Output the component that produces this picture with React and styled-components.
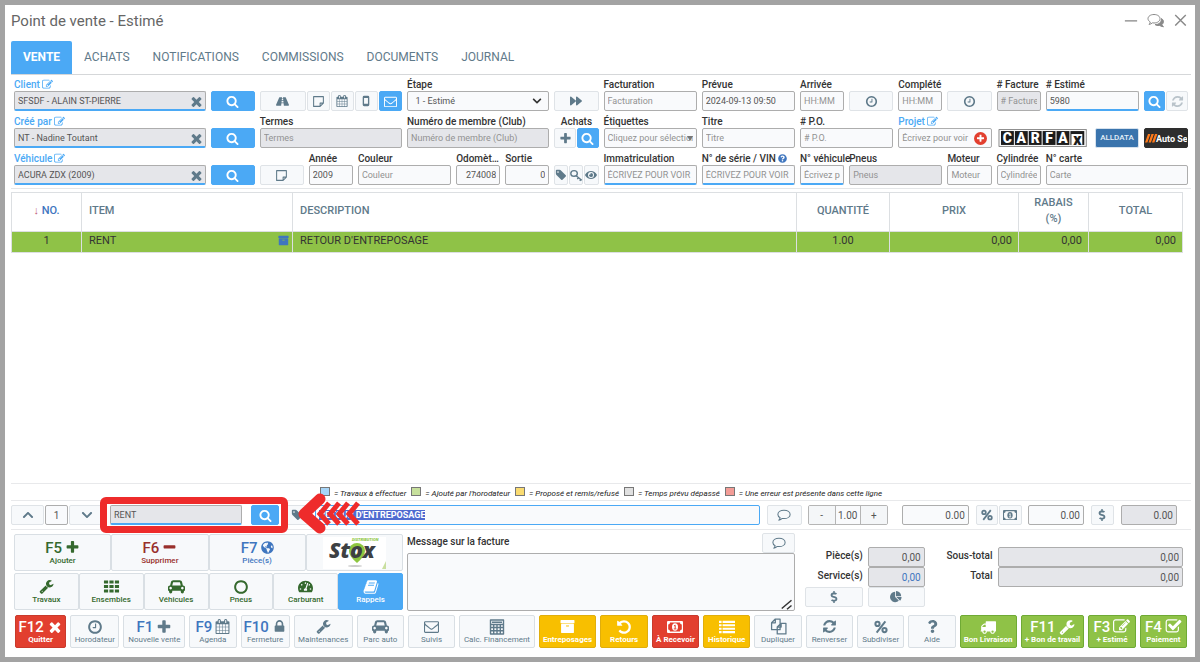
import React, { useEffect, useId, useRef } from "react";
import styled, { createGlobalStyle, css } from "styled-components";
import {
  FaChevronDown,
  FaChevronUp,
  FaDollarSign,
  FaEye,
  FaForward,
  FaGlobeAmericas,
  FaQuestion,
  FaQuestionCircle,
  FaRoad,
  FaTachometerAlt,
} from "react-icons/fa";

const blue = "#4ba9f5";
const slate = "#5f7a8a";
const link = "#3f76bf";
const green = "#8fc247";

const GlobalStyle = createGlobalStyle`
  *, *::before, *::after { box-sizing: border-box; }
  body { margin: 0; background: #a3a3a3; color: #333; font-family: Roboto, "Liberation Sans", sans-serif; font-size: 10px; }
  button, input, select, textarea { font: inherit; margin: 0; }
  button { cursor: pointer; }
  svg { display: block; flex: none; }
`;

/* ---------- icons ---------- */

const paths = {
  search:
    "M1216 832q0-185-131.5-316.5t-316.5-131.5-316.5 131.5-131.5 316.5 131.5 316.5 316.5 131.5 316.5-131.5 131.5-316.5zm512 832q0 52-38 90t-90 38q-54 0-90-38l-343-342q-179 124-399 124-143 0-273.5-55.5t-225-150-150-225-55.5-273.5 55.5-273.5 150-225 225-150 273.5-55.5 273.5 55.5 225 150 150 225 55.5 273.5q0 220-124 399l343 343q37 37 37 90z",
  times:
    "M1490 1322q0 40-28 68l-136 136q-28 28-68 28t-68-28l-294-294-294 294q-28 28-68 28t-68-28l-136-136q-28-28-28-68t28-68l294-294-294-294q-28-28-28-68t28-68l136-136q28-28 68-28t68 28l294 294 294-294q28-28 68-28t68 28l136 136q28 28 28 68t-28 68l-294 294 294 294q28 28 28 68z",
  plus: "M1600 736v192q0 40-28 68t-68 28h-416v416q0 40-28 68t-68 28h-192q-40 0-68-28t-28-68v-416h-416q-40 0-68-28t-28-68v-192q0-40 28-68t68-28h416v-416q0-40 28-68t68-28h192q40 0 68 28t28 68v416h416q40 0 68 28t28 68z",
  minus:
    "M1600 736v192q0 40-28 68t-68 28h-1216q-40 0-68-28t-28-68v-192q0-40 28-68t68-28h1216q40 0 68 28t28 68z",
  edit: "M888 1184l116-116-152-152-116 116v56h96v96h56zm440-720q-16-16-33 1l-350 350q-17 17-1 33t33-1l350-350q17-17 1-33zm80 594v190q0 119-84.5 203.5t-203.5 84.5h-832q-119 0-203.5-84.5t-84.5-203.5v-832q0-119 84.5-203.5t203.5-84.5h832q63 0 117 25 15 7 18 23 3 17-9 29l-49 49q-14 14-32 8-23-6-45-6h-832q-66 0-113 47t-47 113v832q0 66 47 113t113 47h832q66 0 113-47t47-113v-126q0-13 9-22l64-64q15-15 35-7t20 29zm-96-738l288 288-672 672h-288v-288zm444 132l-92 92-288-288 92-92q28-28 68-28t68 28l152 152q28 28 28 68t-28 68z",
  check:
    "M1472 930v318q0 119-84.5 203.5t-203.5 84.5h-832q-119 0-203.5-84.5t-84.5-203.5v-832q0-119 84.5-203.5t203.5-84.5h832q63 0 117 25 15 7 18 23 3 17-9 29l-49 49q-10 10-23 10-3 0-9-2-23-6-45-6h-832q-66 0-113 47t-47 113v832q0 66 47 113t113 47h832q66 0 113-47t47-113v-254q0-13 9-22l64-64q10-10 23-10 6 0 12 3 20 8 20 29zm231-489l-814 814q-24 24-57 24t-57-24l-430-430q-24-24-24-57t24-57l110-110q24-24 57-24t57 24l263 263 647-647q24-24 57-24t57 24l110 110q24 24 24 57t-24 57z",
  clock:
    "M1024 544v448q0 14-9 23t-23 9h-320q-14 0-23-9t-9-23v-64q0-14 9-23t23-9h224v-352q0-14 9-23t23-9h64q14 0 23 9t9 23zm416 352q0-148-73-273t-198-198-273-73-273 73-198 198-73 273 73 273 198 198 273 73 273-73 198-198 73-273zm224 0q0 209-103 385.5t-279.5 279.5-385.5 103-385.5-103-279.5-279.5-103-385.5 103-385.5 279.5-279.5 385.5-103 385.5 103 279.5 279.5 103 385.5z",
  circle:
    "M896 352q-148 0-273 73t-198 198-73 273 73 273 198 198 273 73 273-73 198-198 73-273-73-273-198-198-273-73zm768 544q0 209-103 385.5t-279.5 279.5-385.5 103-385.5-103-279.5-279.5-103-385.5 103-385.5 279.5-279.5 385.5-103 385.5 103 279.5 279.5 103 385.5z",
  wrench:
    "M448 1472q0-26-19-45t-45-19-45 19-19 45 19 45 45 19 45-19 19-45zm644-420l-682 682q-37 37-90 37-52 0-91-37l-106-108q-38-36-38-90 0-53 38-91l681-681q39 98 114.5 173.5t173.5 114.5zm634-435q0 39-23 106-47 134-164.5 217.5t-258.5 83.5q-185 0-316.5-131.5t-131.5-316.5 131.5-316.5 316.5-131.5q58 0 121.5 16.5t107.5 46.5q16 11 16 28t-16 28l-293 169v224l193 107q5-3 79-48.5t135.5-81 70.5-35.5q15 0 23.5 10t8.5 25z",
  lock: "M640 768h512v-192q0-106-75-181t-181-75-181 75-75 181v192zm832 96v576q0 40-28 68t-68 28h-960q-40 0-68-28t-28-68v-576q0-40 28-68t68-28h32v-192q0-184 132-316t316-132 316 132 132 316v192h32q40 0 68 28t28 68z",
  tag: "M576 448q0-53-37.5-90.5t-90.5-37.5-90.5 37.5-37.5 90.5 37.5 90.5 90.5 37.5 90.5-37.5 37.5-90.5zm1067 576q0 53-37 90l-491 492q-39 37-91 37-53 0-90-37l-715-716q-38-37-64.5-101t-26.5-117v-416q0-52 38-90t90-38h416q53 0 117 26.5t102 64.5l715 714q37 39 37 91z",
  archive:
    "M1088 832q0-26-19-45t-45-19h-256q-26 0-45 19t-19 45 19 45 45 19h256q26 0 45-19t19-45zm576-192v960q0 26-19 45t-45 19h-1408q-26 0-45-19t-19-45v-960q0-26 19-45t45-19h1408q26 0 45 19t19 45zm64-448v256q0 26-19 45t-45 19h-1536q-26 0-45-19t-19-45v-256q0-26 19-45t45-19h1536q26 0 45 19t19 45z",
  undo: "M1664 896q0 156-61 298t-164 245-245 164-298 61q-172 0-327-72.5t-264-204.5q-7-10-6.5-22.5t8.5-20.5l137-138q10-9 25-9 16 2 23 12 73 95 179 147t225 52q104 0 198.5-40.5t163.5-109.5 109.5-163.5 40.5-198.5-40.5-198.5-109.5-163.5-163.5-109.5-198.5-40.5q-98 0-188 35.5t-160 101.5l137 138q31 30 14 69-17 40-59 40h-448q-26 0-45-19t-19-45v-448q0-42 40-59 39-17 69 14l130 129q107-101 244.5-156.5t284.5-55.5q156 0 298 61t245 164 164 245 61 298z",
  refresh:
    "M1639 1056q0 5-1 7-64 268-268 434.5t-478 166.5q-146 0-282.5-55t-243.5-157l-129 129q-19 19-45 19t-45-19-19-45v-448q0-26 19-45t45-19h448q26 0 45 19t19 45-19 45l-137 137q71 66 161 102t187 36q134 0 250-65t186-179q11-17 53-117 8-23 30-23h192q13 0 22.5 9.5t9.5 22.5zm25-800v448q0 26-19 45t-45 19h-448q-26 0-45-19t-19-45 19-45l138-138q-148-137-349-137-134 0-250 65t-186 179q-11 17-53 117-8 23-30 23h-199q-13 0-22.5-9.5t-9.5-22.5v-7q65-268 270-434.5t480-166.5q146 0 284 55.5t245 156.5l130-129q19-19 45-19t45 19 19 45z",
  mail: "M1664 1504v-768q-32 36-69 66-268 206-426 338-51 43-83 67t-86.5 48.5-102.5 24.5h-2q-48 0-102.5-24.5t-86.5-48.5-83-67q-158-132-426-338-37-30-69-66v768q0 13 9.5 22.5t22.5 9.5h1472q13 0 22.5-9.5t9.5-22.5zm0-1051v-24.5l-.5-13-3-12.5-5.5-9-9-7.5-14-2.5h-1472q-13 0-22.5 9.5t-9.5 22.5q0 168 147 284 193 152 401 317 6 5 35 29.5t46 37.5 44.5 31.5 50.5 27.5 43 9h2q20 0 43-9t50.5-27.5 44.5-31.5 46-37.5 35-29.5q208-165 401-317 54-43 100.5-115.5t46.5-131.5zm128-37v1088q0 66-47 113t-113 47h-1472q-66 0-113-47t-47-113v-1088q0-66 47-113t113-47h1472q66 0 113 47t47 113z",
  calendar:
    "M192 1664h288v-288h-288v288zm352 0h320v-288h-320v288zm-352-352h288v-320h-288v320zm352 0h320v-320h-320v320zm-352-384h288v-288h-288v288zm736 736h320v-288h-320v288zm-384-736h320v-288h-320v288zm768 736h288v-288h-288v288zm-384-352h320v-320h-320v320zm-352-864v-288q0-13-9.5-22.5t-22.5-9.5h-64q-13 0-22.5 9.5t-9.5 22.5v288q0 13 9.5 22.5t22.5 9.5h64q13 0 22.5-9.5t9.5-22.5zm736 864h288v-320h-288v320zm-384-384h320v-288h-320v288zm384 0h288v-288h-288v288zm32-480v-288q0-13-9.5-22.5t-22.5-9.5h-64q-13 0-22.5 9.5t-9.5 22.5v288q0 13 9.5 22.5t22.5 9.5h64q13 0 22.5-9.5t9.5-22.5zm384-64v1280q0 52-38 90t-90 38h-1408q-52 0-90-38t-38-90v-1280q0-52 38-90t90-38h128v-96q0-66 47-113t113-47h64q66 0 113 47t47 113v96h384v-96q0-66 47-113t113-47h64q66 0 113 47t47 113v96h128q52 0 90 38t38 90z",
  car: "M480 1088q0-66-47-113t-113-47-113 47-47 113 47 113 113 47 113-47 47-113zm36-320h1016l-89-357q-2-8-14-17.5t-21-9.5h-768q-9 0-21 9.5t-14 17.5zm1372 320q0-66-47-113t-113-47-113 47-47 113 47 113 113 47 113-47 47-113zm160-96v384q0 14-9 23t-23 9h-96v128q0 80-56 136t-136 56-136-56-56-136v-128h-1024v128q0 80-56 136t-136 56-136-56-56-136v-128h-96q-14 0-23-9t-9-23v-384q0-93 65.5-158.5t158.5-65.5h28l105-419q23-94 104-157.5t179-63.5h768q98 0 179 63.5t104 157.5l105 419h28q93 0 158.5 65.5t65.5 158.5z",
  truck:
    "M640 1408q0-52-38-90t-90-38-90 38-38 90 38 90 90 38 90-38 38-90zm-384-512h384v-256h-158q-13 0-22 9l-195 195q-9 9-9 22v30zm1280 512q0-52-38-90t-90-38-90 38-38 90 38 90 90 38 90-38 38-90zm256-1088v1024q0 15-4 26.5t-13.5 18.5-16.5 11.5-23.5 6-22.5 2-25.5 0-22.5-.5q0 106-75 181t-181 75-181-75-75-181h-384q0 106-75 181t-181 75-181-75-75-181h-64q-3 0-22.5.5t-25.5 0-22.5-2-23.5-6-16.5-11.5-13.5-18.5-4-26.5q0-26 19-45t45-19v-320q0-8-.5-35t0-38 2.5-34.5 6.5-37 14-30.5 22.5-30l198-198q19-19 50.5-32t58.5-13h160v-192q0-26 19-45t45-19h1024q26 0 45 19t19 45z",
  book: "M1703 478q40 57 18 129l-275 906q-19 64-76.5 107.5t-122.5 43.5h-923q-77 0-148.5-53.5t-99.5-131.5q-24-67-2-127 0-4 3-27t4-37q1-8-3-21.5t-3-19.5q2-11 8-21t16.5-23.5 16.5-23.5q23-38 45-91.5t30-91.5q3-10 .5-30t-.5-28q3-11 17-28t17-23q21-36 42-92t25-90q1-9-2.500-32t.5-28q4-13 22-30.500t22-22.500q19-26 42.500-84.500t27.500-96.500q1-8-3-25.500t-2-26.500q2-8 9-18t18-23 17-21q8-12 16.500-30.500t15-35 16-36 19.500-32 26.500-23.500 36-11.500 47.500 5.500l-1 3q38-9 51-9h761q74 0 114 56t18 130l-274 906q-36 119-71.500 153.500t-128.500 34.500h-869q-27 0-38 15-11 16-1 43 24 70 144 70h923q29 0 56-15.500t35-41.500l300-987q7-22 5-57 38 15 59 43zm-1064 2q-4 13 2 22.500t20 9.500h608q13 0 25.500-9.500t16.500-22.500l21-64q4-13-2-22.500t-20-9.500h-608q-13 0-25.500 9.500t-16.500 22.500zm-83 256q-4 13 2 22.500t20 9.500h608q13 0 25.500-9.500t16.500-22.500l21-64q4-13-2-22.500t-20-9.500h-608q-13 0-25.500 9.500t-16.500 22.500z",
  grid: "M100 256h440v330h-440zM676 256h440v330h-440zM1252 256h440v330h-440zM100 730h440v330h-440zM676 730h440v330h-440zM1252 730h440v330h-440zM100 1204h440v330h-440zM676 1204h440v330h-440zM1252 1204h440v330h-440z",
  list: "M0 200h290v240h-290zM400 200h1392v240h-1392zM0 584h290v240h-290zM400 584h1392v240h-1392zM0 968h290v240h-290zM400 968h1392v240h-1392zM0 1352h290v240h-290zM400 1352h1392v240h-1392z",
  pie: "M768 890l546 546q-106 108-247.500 168t-298.500 60q-209 0-385.500-103t-279.500-279.500-103-385.500 103-385.500 279.500-279.500 385.500-103v762zM955 896h773q0 157-60 298.500t-168 247.500zM1664 768h-768v-768q209 0 385.500 103t279.500 279.500 103 385.500z",
};

const Glyph = ({ name, size = 12 }) => (
  <svg
    width={size}
    height={size}
    viewBox={name === "car" ? "0 0 2048 1792" : "0 0 1792 1792"}
    fill="currentColor"
    aria-hidden="true"
  >
    <path d={paths[name]} />
  </svg>
);

const Line = ({ size = 14, width = 1.3, children }) => (
  <svg
    width={size}
    height={size}
    viewBox="0 0 16 16"
    fill="none"
    stroke="currentColor"
    strokeWidth={width}
    strokeLinejoin="round"
    aria-hidden="true"
  >
    {children}
  </svg>
);

const Note = ({ size }) => (
  <Line size={size}>
    <path d="M2 2h12v8l-4 4H2zM14 10h-4v4" />
  </Line>
);
const Bubble = ({ size }) => (
  <Line size={size} width={1.2}>
    <path d="M8 2.500c4 0 7 2.100 7 4.800s-3 4.800-7 4.800q-1 0-1.900-.2Q4.200 13.600 2 14q1.300-1.400 1.600-2.900C2 10.200 1 8.900 1 7.300c0-2.700 3-4.800 7-4.800z" />
  </Line>
);
const Bubbles = () => (
  <svg width="18" height="16" viewBox="0 0 18 16" fill="none" stroke="currentColor" aria-hidden="true">
    <path d="M7 1.500c3.500 0 6 1.800 6 4.200S10.500 10 7 10l-1.500-.2Q4 11.200 2 11.400q1-1 1.300-2.400C1.900 8.200 1 7 1 5.700c0-2.400 2.500-4.200 6-4.200z" />
    <path
      fill="currentColor"
      d="M14.500 5.500c2.800 2 2.300 4.600.4 6q.4 1.400 1.600 2.200-2.300 0-3.800-1.300-3 .5-4.700-.8 6.600 0 6.500-6.100z"
    />
  </svg>
);
const Phone = () => (
  <Line size={12} width={1.8}>
    <rect x="4.500" y="2" width="7" height="12" rx="1" />
    <path d="M4.500 3h7M4.500 12.500h7" />
  </Line>
);
const Percent = ({ size }) => (
  <Line size={size} width={2.3}>
    <circle cx="4" cy="4.500" r="2.400" />
    <circle cx="12" cy="11.500" r="2.400" />
    <path d="M13 1.500L3 14.500" />
  </Line>
);
const Key = () => (
  <Line size={13} width={1.7}>
    <ellipse cx="5" cy="5.500" rx="4" ry="3.500" />
    <path d="M7.500 8.300l7 5.500M10.500 10.500l-1.500 2M13.500 12.500l-1.500 2" />
  </Line>
);
const Money = ({ size = 16, solid }) => (
  <svg width={size} height={(size * 3) / 4} viewBox="0 0 16 12" aria-hidden="true">
    <rect x="0" y="0" width="16" height="12" rx="1" fill="currentColor" />
    <path d="M3 1.500h10q0 2 1.800 2v5q-1.800 0-1.800 2H3q0-2-1.800-2v-5Q3 3.500 3 1.500z" fill={solid ? "#e23f2f" : "#f7f9fa"} />
    <ellipse cx="8" cy="6" rx="3" ry="3.700" fill="currentColor" />
    <path d="M7 5l1.200-.8v3.500M6.800 7.900h2.600" stroke={solid ? "#e23f2f" : "#f7f9fa"} fill="none" />
  </svg>
);
const Calculator = () => (
  <Line size={16} width={1.4}>
    <path d="M1.500 1h13v14h-13zM1.500 5.500h13M1.500 8.500h13M1.500 11.700h13M4.700 5.500V15M8 5.500V15M11.300 5.500V15M3 3.200h10" />
  </Line>
);
const Copies = () => (
  <Line size={17} width={1.2}>
    <path d="M5 1h4.500v10h-8V4.500zM5 1v3.500H1.500M10.500 5H15v10H6.800V8.500zM10.500 5v3.500H6.800" />
  </Line>
);

/* ---------- shell ---------- */

const Shell = styled.main`
  min-height: 100vh;
  display: flex;
  flex-direction: column;
  background: #fff;
  border: 5px solid #a3a3a3;
  padding: 0 4px 9px 6px;
`;
const TitleBar = styled.header`
  display: flex;
  align-items: center;
  height: 36px;
  padding: 0 4px 5px 0;
`;
const Title = styled.h1`
  flex: 1;
  margin: 0;
  font-size: 15px;
  line-height: 20px;
  font-weight: 400;
  color: #666;
`;
const WindowButtons = styled.div`
  display: flex;
  gap: 9px;
  button {
    display: flex;
    padding: 0;
    border: 0;
    background: none;
    color: #8a8a8a;
  }
`;
const Tabs = styled.nav`
  display: flex;
  height: 34px;
  border-bottom: 1px solid #d5d7d9;
`;
const Tab = styled.a`
  padding: 0 11px 0 12px;
  font-size: 12px;
  line-height: 32px;
  text-decoration: none;
  color: ${slate};
  border-radius: 2px 2px 0 0;
  ${(p) => p.$active && css`padding: 0 12px; background: ${blue}; color: #fff; font-weight: 700;`}
`;

/* ---------- form ---------- */

const FormGrid = styled.form`
  display: grid;
  grid-template-columns: repeat(24, minmax(0, 1fr));
  gap: 4px 5px;
  align-items: end;
  padding: 3px 3px 3px 3px;
  border-bottom: 1px solid #e4e6e8;
`;
const Cell = styled.div`
  grid-column: span ${(p) => p.$span || 1};
  min-width: 0;
`;
const Caption = styled.label`
  display: flex;
  align-items: center;
  gap: 2px;
  height: 13px;
  font-size: 10px;
  font-weight: 500;
  line-height: 13px;
  white-space: nowrap;
  color: ${(p) => (p.$link ? blue : "#333")};
  ${(p) => p.$center && css`justify-content: center;`}
  ${(p) => p.$clip && css`display: block; overflow: hidden; text-overflow: ellipsis;`}
  svg { color: ${(p) => (p.$link ? blue : link)}; }
`;
const Box = styled.div`
  position: relative;
`;
const boxed = css`
  width: 100%;
  min-width: 0;
  height: 20px;
  padding: 0 3px;
  border: 1px solid #adadad;
  border-radius: 2px;
  background: #f9fafc;
  color: #555;
  font-size: 9px;
  outline: 0;
  &::placeholder { color: #929292; opacity: 1; }
`;
const Input = styled.input`
  ${boxed}
  ${(p) => p.$gray && css`background: #e5e6ea;`}
  ${(p) => p.$search && css`border-bottom: 2px solid ${blue};`}
  ${(p) => p.$right && css`text-align: right;`}
  ${(p) => p.$center && css`text-align: center;`}
  ${(p) => p.$blue && css`color: ${link};`}
  ${(p) => p.$tall && css`font-size: 10px;`}
`;
const Select = styled.select`
  ${boxed}
  appearance: none;
`;
const Inset = styled.button`
  position: absolute;
  top: 0;
  right: ${(p) => p.$right || 2}px;
  height: 20px;
  padding: 0;
  border: 0;
  background: none;
  color: ${slate};
  display: flex;
  align-items: center;
  pointer-events: ${(p) => (p.$static ? "none" : "auto")};
`;
const RoundPlus = styled.span`
  display: grid;
  place-items: center;
  width: 13px;
  height: 13px;
  border-radius: 50%;
  background: #e23f2f;
  color: #fff;
`;
const Btn = styled.button`
  display: flex;
  align-items: center;
  justify-content: center;
  min-width: 0;
  width: 100%;
  height: 20px;
  padding: 0;
  border: 1px solid #dfe3e7;
  border-radius: 2px;
  background: #f7f9fb;
  color: ${slate};
  ${(p) => p.$primary && css`background: ${blue}; border-color: ${blue}; color: #fff;`}
  ${(p) => p.$faded && css`color: #b9c3ca;`}
`;
const BtnRow = styled.div`
  display: grid;
  grid-template-columns: ${(p) => p.$cols};
  gap: 1px;
`;

const Field = ({ label, span, edit, clear, clip, help, children, ...rest }) => {
  const id = useId();
  return (
    <Cell $span={span}>
      <Caption htmlFor={id} $link={edit} $clip={clip}>
        {label}
        {edit && <Glyph name="edit" size={11} />}
        {help && <FaQuestionCircle size={9} />}
      </Caption>
      <Box>
        <Input id={id} {...rest} />
        {clear && (
          <Inset type="button" aria-label="Effacer">
            <Glyph name="times" size={15} />
          </Inset>
        )}
        {children}
      </Box>
    </Cell>
  );
};

const SearchButton = ({ label = "Rechercher" }) => (
  <Btn type="button" $primary aria-label={label}>
    <Glyph name="search" size={13} />
  </Btn>
);

const BrandButton = styled(Btn)`
  overflow: hidden;
  white-space: nowrap;
  background: ${(p) => p.$bg};
  border-color: ${(p) => p.$edge};
  color: #fff;
`;

const Carfax = () => (
  <svg width="100%" height="20" viewBox="0 0 92 20" role="img" aria-label="CARFAX">
    <rect x="1" y="1.500" width="88" height="17" fill="#fff" stroke="#888" />
    {"CARFA".split("").map((c, i) => (
      <g key={c + i}>
        <rect x={3 + i * 14} y="3" width="13" height="14" fill="#1c1c1c" />
        <text x={9.5 + i * 14} y="15" textAnchor="middle" fontSize="14" fontWeight="900" fill="#fff">{c}</text>
      </g>
    ))}
    <rect x="73" y="3" width="14" height="14" fill="#1c1c1c" />
    <rect x="74" y="6" width="11" height="11" fill="#fff" />
    <text x="80" y="17" textAnchor="middle" fontSize="16" fontWeight="900" fill="#1c1c1c">x</text>
  </svg>
);
const AutoServe = () => (
  <svg width="43" height="18" viewBox="0 0 43 18" role="img" aria-label="Auto Se">
    <path d="M1 13.500L4 5h2.400L3.400 13.500zM4.500 13.500L7.500 5h2.400L6.900 13.500zM8 13.500L11 5h2.400L10.400 13.500z" fill="#ff7a1a" />
    <text x="12" y="13" fontSize="9" fontWeight="700" fill="#fff">Auto Se</text>
  </svg>
);
const Stox = () => (
  <svg width="63" height="32" viewBox="0 0 63 32" role="img" aria-label="Stox Distribution">
    <rect width="63" height="32" fill="#fff" />
    <ellipse cx="32" cy="29" rx="7" ry="1" fill="#ccc" />
    <path d="M34 26q-8-7-8-12a8 8 0 0 1 16 0q0 5-8 12z" fill="#8dc63f" />
    <circle cx="34" cy="14" r="3" fill="#fff" />
    <text x="6" y="21" fontSize="21" fontStyle="italic" fontWeight="800" fontFamily="Open Sans" fill="#3d4043">Stox</text>
    <text x="29" y="4" fontSize="4" fontStyle="italic" fontWeight="900" fill="#8dc63f">DISTRIBUTION</text>
    <path d="M63 24v8h-4z" fill="#c9dfa0" />
  </svg>
);

const HeaderForm = () => (
  <FormGrid>
    <Field span={4} label="Client" edit clear $gray $search defaultValue="SFSDF - ALAIN ST-PIERRE" />
    <Cell><SearchButton /></Cell>
    <Cell $span={3}>
      <BtnRow $cols="2fr 1fr 1fr 1fr 1fr">
        <Btn type="button" aria-label="Route"><FaRoad size={13} /></Btn>
        <Btn type="button" aria-label="Note"><Note size={13} /></Btn>
        <Btn type="button" aria-label="Calendrier"><Glyph name="calendar" /></Btn>
        <Btn type="button" aria-label="Mobile"><Phone /></Btn>
        <Btn type="button" $primary aria-label="Courriel"><Glyph name="mail" size={13} /></Btn>
      </BtnRow>
    </Cell>
    <Cell $span={3}>
      <Caption htmlFor="etape">Étape</Caption>
      <Box>
        <Select id="etape"><option>&nbsp; 1 - Estimé</option></Select>
        <Inset as="span" $static $right={7}><FaChevronDown size={10} color="#333" /></Inset>
      </Box>
    </Cell>
    <Cell><Btn type="button" aria-label="Avancer"><FaForward size={12} /></Btn></Cell>
    <Field span={2} label="Facturation" placeholder="Facturation" />
    <Field span={2} label="Prévue" defaultValue="2024-09-13 09:50" />
    <Field label="Arrivée" placeholder="HH:MM" />
    <Cell><Btn type="button" aria-label="Heure d'arrivée"><Glyph name="clock" size={13} /></Btn></Cell>
    <Field label="Complété" placeholder="HH:MM" />
    <Cell><Btn type="button" aria-label="Heure complétée"><Glyph name="clock" size={13} /></Btn></Cell>
    <Field label="# Facture" placeholder="# Facture" $gray />
    <Field span={2} label="# Estimé" defaultValue="5980" $search />
    <Cell>
      <BtnRow $cols="1fr 1fr">
        <SearchButton />
        <Btn type="button" $faded aria-label="Rafraîchir"><Glyph name="refresh" size={13} /></Btn>
      </BtnRow>
    </Cell>

    <Field span={4} label="Créé par" edit clear $gray $search defaultValue="NT - Nadine Toutant" />
    <Cell><SearchButton /></Cell>
    <Field span={3} label="Termes" placeholder="Termes" $gray />
    <Field span={3} label="Numéro de membre (Club)" placeholder="Numéro de membre (Club)" $gray />
    <Cell>
      <Caption as="div" $center>Achats</Caption>
      <BtnRow $cols="1fr 1fr">
        <Btn type="button" aria-label="Ajouter"><Glyph name="plus" size={13} /></Btn>
        <SearchButton />
      </BtnRow>
    </Cell>
    <Field span={2} label="Étiquettes" placeholder="Cliquez pour sélectionner">
      <Inset as="span" $static $right={4}>
        <svg width="6" height="5" viewBox="0 0 6 5" aria-hidden="true"><path d="M0 0h6L3 5z" fill="#777" /></svg>
      </Inset>
    </Field>
    <Field span={2} label="Titre" placeholder="Titre" />
    <Field span={2} label="# P.O." placeholder="# P.O." />
    <Field span={2} label="Projet" edit placeholder="Écrivez pour voir">
      <Inset type="button" $right={5} aria-label="Ajouter un projet"><RoundPlus><Glyph name="plus" size={9} /></RoundPlus></Inset>
    </Field>
    <Cell $span={2}><BrandButton type="button" $bg="#fff" $edge="#fff"><Carfax /></BrandButton></Cell>
    <Cell>
      <BrandButton type="button" $bg="#3a74ad" $edge="#d6e2ee">
        <svg width="38" height="12" viewBox="0 0 38 12" role="img" aria-label="ALLDATA">
          <text x="19" y="8" textAnchor="middle" fontSize="8" fontWeight="500" fill="#e4eef8">ALLDATA</text>
        </svg>
      </BrandButton>
    </Cell>
    <Cell><BrandButton type="button" $bg="#2e2e2e" $edge="#2e2e2e"><AutoServe /></BrandButton></Cell>

    <Field span={4} label="Véhicule" edit clear $gray $search defaultValue="ACURA ZDX (2009)" />
    <Cell><SearchButton /></Cell>
    <Cell><Btn type="button" aria-label="Note"><Note size={13} /></Btn></Cell>
    <Field label="Année" defaultValue="2009" />
    <Field span={2} label="Couleur" placeholder="Couleur" />
    <Field label="Odomètre" clip defaultValue="274008" $right />
    <Field label="Sortie" defaultValue="0" $right />
    <Cell>
      <BtnRow $cols="1fr 1fr 1fr">
        <Btn type="button" aria-label="Étiquette"><Glyph name="tag" /></Btn>
        <Btn type="button" aria-label="Clé"><Key /></Btn>
        <Btn type="button" aria-label="Voir"><FaEye size={12} /></Btn>
      </BtnRow>
    </Cell>
    <Field span={2} label="Immatriculation" placeholder="ÉCRIVEZ POUR VOIR" $search />
    <Field span={2} label="N° de série / VIN" help placeholder="ÉCRIVEZ POUR VOIR" $search />
    <Field label="N° véhicule" placeholder="Écrivez pour voir" $search />
    <Field span={2} label="Pneus" placeholder="Pneus" $gray />
    <Field label="Moteur" placeholder="Moteur" />
    <Field label="Cylindrée" placeholder="Cylindrée" />
    <Field span={3} label="N° carte" placeholder="Carte" />
  </FormGrid>
);

/* ---------- table ---------- */

const TableArea = styled.section`
  flex: 1;
  padding: 3px 8px 0 0;
`;
const Table = styled.table`
  width: 100%;
  table-layout: fixed;
  border-collapse: collapse;
  font-size: 11px;
  th, td { border: 1px solid #dcdfe2; padding: 0 7px; text-align: left; }
  th { height: 39px; color: ${slate}; font-size: 11px; font-weight: 500; line-height: 16px; padding-bottom: 3px; }
  td { height: 21px; padding-bottom: 4px; background: ${green}; color: #333; }
  .center { text-align: center; }
  .right { text-align: right; padding-right: 6px; }
`;
const Sorted = styled.span`
  color: ${link};
  i { font-style: normal; font-weight: 400; color: #c0607a; }
`;
const ItemLine = styled.span`
  display: flex;
  justify-content: space-between;
  align-items: center;
  margin-right: -4px;
  svg { color: ${link}; }
`;

/* ---------- legend & line editor ---------- */

const Legend = styled.ul`
  display: flex;
  justify-content: center;
  gap: 5px;
  margin: 0;
  padding: 3px 0 2px;
  height: 18px;
  list-style: none;
  border-top: 1px solid #e8e9eb;
  border-bottom: 1px solid #e8e9eb;
  font-size: 8px;
  font-style: italic;
  line-height: 14px;
  color: #222;
  li { display: flex; gap: 4px; white-space: nowrap; }
`;
const Swatch = styled.span`
  width: 10px;
  height: 9px;
  border: 1px solid #777;
  background: ${(p) => p.$color};
`;
const Description = styled(Input)`
  border-color: ${blue};
  font-weight: 700;
  &::selection { background: #4e6ad0; color: #fff; }
`;
const Stepper = styled.div`
  display: grid;
  grid-template-columns: 1fr 1fr 1fr;
  border: 1px solid #b5b5b5;
  border-radius: 2px;
  height: 20px;
  overflow: hidden;
  button, input { min-width: 0; border: 0; padding: 0; text-align: center; background: #f4f6f8; color: #555; font-size: 10px; }
  input { background: #f9fafc; border-left: 1px solid #b5b5b5; border-right: 1px solid #b5b5b5; outline: 0; }
`;
const Highlight = styled.span`
  position: absolute;
  left: 89px;
  top: -4px;
  width: 188px;
  height: 36px;
  border: 7px solid #ee2b2b;
  border-radius: 6px;
  pointer-events: none;
`;
const Arrow = styled.svg`
  position: absolute;
  left: 286px;
  top: -11px;
  pointer-events: none;
`;
const Bar = styled.section`
  position: relative;
  display: flex;
  align-items: center;
  height: 29px;
  padding-right: 14px;
  border-bottom: 1px solid #e8e9eb;
`;
const Slot = styled.div`
  flex: ${(p) => p.$w} 1 0;
  min-width: 0;
  margin-left: ${(p) => p.$before || 0}px;
`;

const LineEditor = () => {
  const description = useRef(null);
  useEffect(() => {
    description.current.focus({ preventScroll: true });
    description.current.select();
  }, []);
  return (
    <Bar>
      <Slot $w={33}><Btn aria-label="Ligne précédente"><FaChevronUp size={12} /></Btn></Slot>
      <Slot $w={23} $before={1}><Input $center $tall aria-label="Ligne" defaultValue="1" /></Slot>
      <Slot $w={35} $before={1}><Btn aria-label="Ligne suivante"><FaChevronDown size={12} /></Btn></Slot>
      <Slot $w={132} $before={6}><Input $gray $search aria-label="Item" defaultValue="RENT" /></Slot>
      <Slot $w={28} $before={9}><SearchButton label="Rechercher un item" /></Slot>
      <Slot $w={24} $before={6}><Btn aria-label="Étiquette"><Glyph name="tag" /></Btn></Slot>
      <Slot $w={444} $before={6}>
        <Description ref={description} aria-label="Description" defaultValue="RETOUR D'ENTREPOSAGE" />
      </Slot>
      <Slot $w={35} $before={7}><Btn aria-label="Commentaire"><Bubble size={14} /></Btn></Slot>
      <Slot $w={80} $before={6}>
        <Stepper>
          <button aria-label="Moins">-</button>
          <input aria-label="Quantité" defaultValue="1.00" />
          <button aria-label="Plus">+</button>
        </Stepper>
      </Slot>
      <Slot $w={67} $before={14}><Input $right $tall aria-label="Prix" defaultValue="0.00" /></Slot>
      <Slot $w={22} $before={7}><Btn aria-label="Rabais en pourcentage"><Percent size={12} /></Btn></Slot>
      <Slot $w={23} $before={1}><Btn aria-label="Rabais en montant"><Money size={14} /></Btn></Slot>
      <Slot $w={56} $before={6}><Input $right $tall aria-label="Rabais" defaultValue="0.00" /></Slot>
      <Slot $w={23} $before={7}><Btn aria-label="Montant"><FaDollarSign size={12} /></Btn></Slot>
      <Slot $w={56} $before={7}><Input $gray $right $tall aria-label="Total de la ligne" defaultValue="0.00" /></Slot>
      <Highlight />
      <Arrow width="64" height="48" viewBox="0 0 64 48" fill="none" stroke="#ee2b2b" aria-hidden="true">
        <path d="M23 9L7 24L23 38" strokeWidth="11" strokeLinecap="round" strokeLinejoin="round" />
        <path d="M32 13L23 24l9 10M42 13L33 24l9 10M51 13L42 24l9 10M61 13L52 24l9 10" strokeWidth="5" />
      </Arrow>
    </Bar>
  );
};

/* ---------- lower panel ---------- */

const Lower = styled.section`
  display: grid;
  grid-template-columns: 389fr 388fr 384fr;
  column-gap: 4px;
  padding: 3px 8px 0 3px;
`;
const Keys = styled.div`
  display: grid;
  grid-template-columns: repeat(12, minmax(0, 1fr));
  row-gap: 2px;
  align-self: start;
  padding-top: 1px;
`;
const Tile = styled.button`
  grid-column: span ${(p) => p.$span};
  display: flex;
  flex-direction: column;
  align-items: center;
  justify-content: center;
  height: 37px;
  min-width: 0;
  padding: 0;
  overflow: hidden;
  border: 1px solid #d9dfe4;
  border-radius: 2px;
  background: #f7f9fb;
  color: ${(p) => p.$color || "#35692e"};
  font-size: 8px;
  font-weight: 500;
  line-height: 10px;
  ${(p) => p.$primary && css`background: ${blue}; border-color: ${blue}; color: #fff;`}
`;
const Top = styled.span`
  display: flex;
  align-items: center;
  justify-content: center;
  gap: 3px;
  height: 17px;
  font-size: 15px;
  font-weight: 500;
  color: ${(p) => p.$color || "inherit"};
  svg { color: ${(p) => p.$icon || "inherit"}; }
`;
const Message = styled.div`
  display: flex;
  flex-direction: column;
`;
const MessageHead = styled.div`
  display: flex;
  justify-content: space-between;
  align-items: center;
  label { padding-bottom: 3px; }
  button { width: 33px; }
`;
const TextBox = styled.div`
  position: relative;
  display: flex;
  textarea {
    ${boxed}
    height: 58px;
    resize: none;
  }
  svg { position: absolute; right: 2px; bottom: 1px; color: #333; }
`;
const Totals = styled.div`
  display: grid;
  grid-template-columns: 58fr 57fr 63fr 186fr;
  column-gap: 5px;
  align-content: start;
  align-items: center;
  padding: 14px 0 0 6px;
  label { text-align: right; font-size: 10px; font-weight: 500; line-height: 16px; padding-bottom: 3px; white-space: nowrap; }
`;
const Footer = styled.footer`
  display: flex;
  gap: 4px;
  padding: 4px 4px 0;
`;
const tones = {
  plain: ["#f7f9fb", "#d9dfe4", slate],
  red: ["#e23f2f", "#c93a2c", "#fff"],
  amber: ["#f8bf00", "#e0ae0c", "#fff"],
  green: [green, "#6faa35", "#fff"],
};
const Action = styled.button`
  flex: ${(p) => p.$w} 1 0;
  display: flex;
  flex-direction: column;
  align-items: center;
  justify-content: center;
  min-width: 0;
  height: 33px;
  padding: 0;
  overflow: hidden;
  border: 1px solid ${(p) => tones[p.$tone][1]};
  border-radius: 2px;
  background: ${(p) => tones[p.$tone][0]};
  color: ${(p) => tones[p.$tone][2]};
  font-size: 8px;
  font-weight: ${(p) => (p.$tone === "plain" ? 400 : 700)};
  line-height: 10px;
  white-space: nowrap;
`;

const actions = [
  [51, "red", "F12", <Glyph name="times" size={16} />, "Quitter"],
  [49, "plain", "", <Glyph name="clock" size={16} />, "Horodateur"],
  [62, "plain", "F1", <Glyph name="plus" size={16} />, "Nouvelle vente"],
  [47, "plain", "F9", <Glyph name="calendar" size={15} />, "Agenda"],
  [49, "plain", "F10", <Glyph name="lock" size={15} />, "Fermeture"],
  [59, "plain", "", <Glyph name="wrench" size={15} />, "Maintenances"],
  [47, "plain", "", <Glyph name="car" size={17} />, "Parc auto"],
  [47, "plain", "", <Glyph name="mail" size={15} />, "Suivis"],
  [76, "plain", "", <Calculator />, "Calc. Financement"],
  [58, "amber", "", <Glyph name="archive" size={15} />, "Entreposages"],
  [47, "amber", "", <Glyph name="undo" size={16} />, "Retours"],
  [47, "red", "", <Money size={16} solid />, "À Recevoir"],
  [47, "amber", "", <Glyph name="list" size={16} />, "Historique"],
  [47, "plain", "", <Copies />, "Dupliquer"],
  [47, "plain", "", <Glyph name="refresh" size={15} />, "Renverser"],
  [47, "plain", "", <Percent size={14} />, "Subdiviser"],
  [47, "plain", "", <FaQuestion size={13} />, "Aide"],
  [57, "green", "", <Glyph name="truck" size={16} />, "Bon Livraison"],
  [64, "green", "F11", <Glyph name="wrench" size={16} />, "+ Bon de travail"],
  [47, "green", "F3", <Glyph name="edit" size={17} />, "+ Estimé"],
  [47, "green", "F4", <Glyph name="check" size={17} />, "Paiement"],
];

const legend = [
  ["#a6d4f7", "Travaux à effectuer"],
  ["#c7e09c", "Ajouté par l'horodateur"],
  ["#fadb70", "Proposé et remis/refusé"],
  ["#e0e0e0", "Temps prévu dépassé"],
  ["#f39c96", "Une erreur est présente dans cette ligne"],
];

export default function App() {
  return (
    <>
      <GlobalStyle />
      <Shell>
        <TitleBar>
          <Title>Point de vente - Estimé</Title>
          <WindowButtons>
            <button aria-label="Réduire"><Line size={14} width={1.5}><path d="M1 9h14" /></Line></button>
            <button aria-label="Messages"><Bubbles /></button>
            <button aria-label="Fermer"><Line size={13} width={1.7}><path d="M1.500 2.500l13 13M14.500 2.500l-13 13" /></Line></button>
          </WindowButtons>
        </TitleBar>
        <Tabs>
          {["VENTE", "ACHATS", "NOTIFICATIONS", "COMMISSIONS", "DOCUMENTS", "JOURNAL"].map((t, i) => (
            <Tab key={t} href="#" $active={i === 0}>{t}</Tab>
          ))}
        </Tabs>
        <HeaderForm />
        <TableArea>
          <Table>
            <colgroup>
              {[70, 211, 504, 93, 129, 70, 94].map((w, i) => (
                <col key={i} style={{ width: `${(w / 1171) * 100}%` }} />
              ))}
            </colgroup>
            <thead>
              <tr>
                <th className="center"><Sorted><i>↓</i> NO.</Sorted></th>
                <th>ITEM</th>
                <th>DESCRIPTION</th>
                <th className="center">QUANTITÉ</th>
                <th className="center">PRIX</th>
                <th className="center">RABAIS (%)</th>
                <th className="center">TOTAL</th>
              </tr>
            </thead>
            <tbody>
              <tr>
                <td className="center">1</td>
                <td><ItemLine>RENT <Glyph name="archive" size={11} /></ItemLine></td>
                <td>RETOUR D'ENTREPOSAGE</td>
                <td className="center">1.00</td>
                <td className="right">0,00</td>
                <td className="right">0,00</td>
                <td className="right">0,00</td>
              </tr>
            </tbody>
          </Table>
        </TableArea>
        <Legend>
          {legend.map(([c, t]) => (
            <li key={t}><Swatch $color={c} />= {t}</li>
          ))}
        </Legend>
        <LineEditor />
        <Lower>
          <Keys>
            <Tile $span={3}><Top>F5 <Glyph name="plus" size={15} /></Top>Ajouter</Tile>
            <Tile $span={3} $color="#99302c"><Top>F6 <Glyph name="minus" size={15} /></Top>Supprimer</Tile>
            <Tile $span={3} $color={link}><Top>F7 <FaGlobeAmericas size={13} /></Top>Pièce(s)</Tile>
            <Tile $span={3} aria-label="Stox"><Stox /></Tile>
            <Tile $span={2}><Top><Glyph name="wrench" size={15} /></Top>Travaux</Tile>
            <Tile $span={2}><Top><Glyph name="grid" size={17} /></Top>Ensembles</Tile>
            <Tile $span={2}><Top><Glyph name="car" size={17} /></Top>Véhicules</Tile>
            <Tile $span={2}><Top><Glyph name="circle" size={16} /></Top>Pneus</Tile>
            <Tile $span={2}><Top><FaTachometerAlt size={15} /></Top>Carburant</Tile>
            <Tile $span={2} $primary><Top><Glyph name="book" size={16} /></Top>Rappels</Tile>
          </Keys>
          <Message>
            <MessageHead>
              <Caption htmlFor="message">Message sur la facture</Caption>
              <Btn aria-label="Commentaire"><Bubble size={14} /></Btn>
            </MessageHead>
            <TextBox>
              <textarea id="message" />
              <Line size={12} width={2}><path d="M1 14L14 3M8 15l6-5" /></Line>
            </TextBox>
          </Message>
          <Totals>
            <label htmlFor="pieces">Pièce(s)</label>
            <Input id="pieces" $gray $right $tall defaultValue="0,00" />
            <label htmlFor="soustotal">Sous-total</label>
            <Input id="soustotal" $gray $right $tall defaultValue="0,00" />
            <label htmlFor="services">Service(s)</label>
            <Input id="services" $gray $right $tall $blue defaultValue="0,00" />
            <label htmlFor="total">Total</label>
            <Input id="total" $gray $right $tall defaultValue="0,00" />
            <Btn aria-label="Prix"><FaDollarSign size={12} /></Btn>
            <Btn aria-label="Graphique"><Glyph name="pie" size={12} /></Btn>
          </Totals>
        </Lower>
        <Footer>
          {actions.map(([w, tone, key, icon, label]) => (
            <Action key={label} $w={w} $tone={tone}>
              <Top $color={tone === "plain" && key ? link : undefined} $icon={tone === "plain" ? slate : undefined}>
                {key}{icon}
              </Top>
              {label}
            </Action>
          ))}
        </Footer>
      </Shell>
    </>
  );
}
